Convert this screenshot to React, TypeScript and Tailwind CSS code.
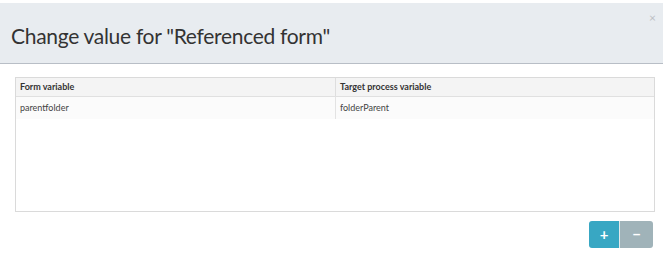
import React from 'react';

const rows = [{ form: 'parentfolder', target: 'folderParent' }];

export default function App() {
  return (
    <div className="w-[663px] h-[258px] bg-white pt-[3px] font-['Lato',sans-serif] text-[#333]">
      {/* Modal header */}
      <div className="relative h-[61px] bg-[#e8ecf0] border-b border-[#b8bec6] flex items-center pl-[11px]">
        <h2 className="text-[21px] tracking-[-0.3px] leading-none font-normal text-[#333] mt-[5px]">Change value for "Referenced form"</h2>
        <span className="absolute right-[7px] top-[9px] text-[12px] leading-none text-[#bcc0c4]">×</span>
      </div>

      {/* Mapping table */}
      <div className="px-[15px] pt-[13px]">
        <div className="h-[135px] w-[640px] border border-[#dadada] bg-white">
          <div className="grid grid-cols-[320px_1fr] bg-[#f4f4f4] border-b border-[#e0e0e0] h-[19px] text-[9px] font-bold text-[#333]">
            <div className="flex items-center pl-[4px] border-r border-[#dedede]">Form variable</div>
            <div className="flex items-center pl-[4px]">Target process variable</div>
          </div>
          {rows.map((r, i) => (
            <div key={i} className="grid grid-cols-[320px_1fr] bg-[#fbfbfb] h-[22px] text-[9px] text-[#444]">
              <div className="flex items-center pl-[4px] border-r border-[#e3e3e3]">{r.form}</div>
              <div className="flex items-center pl-[4px]">{r.target}</div>
            </div>
          ))}
        </div>
      </div>

      {/* Add / remove */}
      <div className="flex justify-end pr-[10px] pt-[9px]">
        <div className="flex h-[27px] rounded-[3px] overflow-hidden">
          <button className="w-[31px] bg-[#38a7c3] text-white text-[15px] font-bold leading-none flex items-center justify-center border-r border-[#e5e9eb]">+</button>
          <button className="w-[33px] bg-[#a0b3b9] text-white text-[15px] font-bold leading-none flex items-center justify-center">−</button>
        </div>
      </div>
    </div>
  );
}
